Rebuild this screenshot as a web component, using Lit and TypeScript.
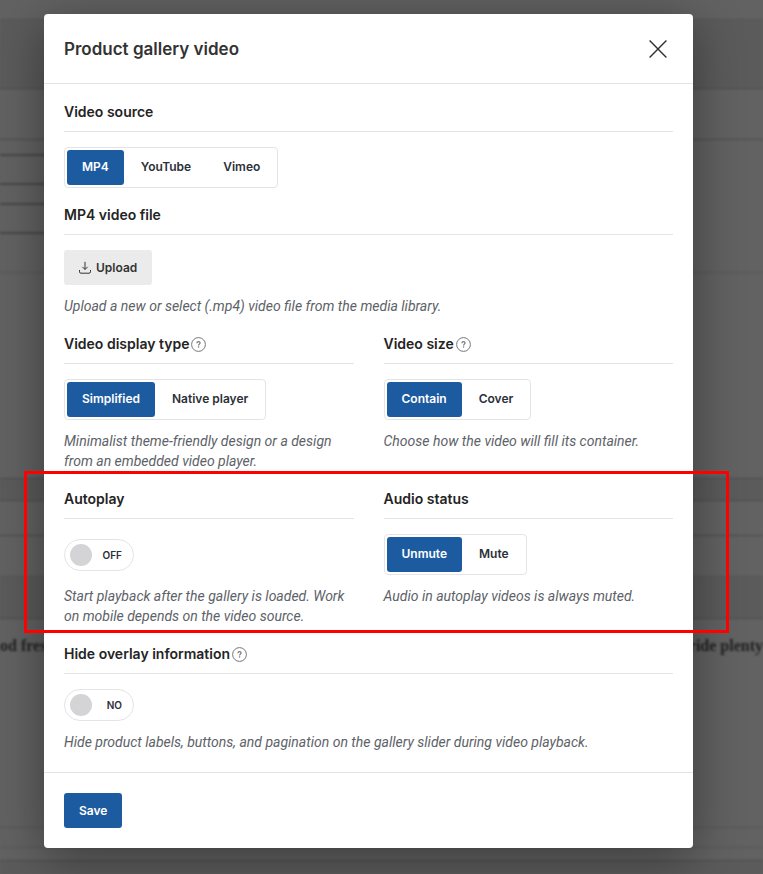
import { LitElement, html, css, nothing } from "lit";
import { customElement, property, state } from "lit/decorators.js";
import { classMap } from "lit/directives/class-map.js";
import { styleMap } from "lit/directives/style-map.js";

const base = css`
  :host {
    display: block;
    box-sizing: border-box;
    font-family: Inter, "Liberation Sans", sans-serif;
  }
  *,
  *::before,
  *::after {
    box-sizing: border-box;
  }
`;

@customElement("setting-field")
export class SettingField extends LitElement {
  @property() heading = "";
  @property() note = "";
  @property({ type: Boolean }) help = false;
  @property({ type: Boolean }) tall = false;

  static styles = [
    base,
    css`
      .heading {
        display: flex;
        align-items: center;
        gap: 2px;
        height: 32px;
        padding-bottom: 7px;
        margin: 0 0 15px;
        border-bottom: 1px solid #e4e4e4;
        color: #242424;
        font-size: 14px;
        font-weight: 600;
        line-height: 24px;
      }
      .help {
        display: grid;
        place-items: center;
        width: 15px;
        height: 15px;
        padding: 0;
        border: 0;
        background: none;
        color: #777;
      }
      .control {
        display: flex;
        align-items: center;
      }
      .tall {
        min-height: 41px;
      }
      .note {
        margin: 11px 0 1px;
        color: #5d6268;
        font-family: Roboto, "Liberation Sans", sans-serif;
        font-size: 14px;
        font-style: italic;
        line-height: 20px;
      }
    `,
  ];

  render() {
    return html`
      <h3 class="heading">
        <span>${this.heading}</span>
        ${this.help
          ? html`<button class="help" type="button" aria-label="Help">
              <svg width="15" height="15" viewBox="0 0 15 15" fill="none" stroke="currentColor">
                <circle cx="7.5" cy="7.5" r="6.9" stroke-width="1" />
                <path d="M5.9 6.2c0-1 .7-1.6 1.6-1.6s1.6.6 1.6 1.4c0 1.1-1.5 1.2-1.5 2.4" stroke-width="1.2" />
                <path d="M7.55 9.3v1.3" stroke-width="1.3" />
              </svg>
            </button>`
          : nothing}
      </h3>
      <div class=${classMap({ control: true, tall: this.tall })}><slot></slot></div>
      ${this.note ? html`<p class="note">${this.note}</p>` : nothing}
    `;
  }
}

@customElement("segment-group")
export class SegmentGroup extends LitElement {
  @property() label = "";
  @property({ attribute: false }) options: string[] = [];
  @state() private selected = 0;

  static styles = [
    base,
    css`
      .group {
        display: flex;
        gap: 2px;
        margin: 0;
        padding: 2px;
        border: 1px solid #e4e4e4;
        border-radius: 4px;
      }
      .option {
        position: relative;
        display: block;
        height: 35px;
        padding: 0 15px;
        border-radius: 3px;
        color: #2c3038;
        font-size: 12px;
        font-weight: 600;
        line-height: 34px;
        white-space: nowrap;
      }
      .chosen {
        background: #1d5ba1;
        color: #fff;
      }
      .radio {
        position: absolute;
        inset: 0;
        margin: 0;
        opacity: 0;
      }
    `,
  ];

  render() {
    return html`<div class="group" role="radiogroup" aria-label=${this.label}>
      ${this.options.map(
        (text, i) => html`<label class=${classMap({ option: true, chosen: i === this.selected })}
          ><input
            class="radio"
            type="radio"
            name="choice"
            .checked=${i === this.selected}
            @change=${() => (this.selected = i)}
          />${text}</label
        >`
      )}
    </div>`;
  }
}

@customElement("toggle-switch")
export class ToggleSwitch extends LitElement {
  @property() label = "";
  @property() on = "ON";
  @property() off = "OFF";
  @state() private checked = false;

  static styles = [
    base,
    css`
      .toggle {
        position: relative;
        display: flex;
        align-items: center;
        justify-content: space-between;
        width: 70px;
        height: 32px;
        padding: 0 11px 0 5px;
        border: 1px solid #e4e4e4;
        border-radius: 16px;
        color: #2c3038;
        font-size: 10px;
        font-weight: 600;
      }
      .knob {
        width: 22px;
        height: 22px;
        border-radius: 50%;
        background: #d4d4d6;
      }
      .active {
        flex-direction: row-reverse;
        padding: 0 5px 0 11px;
      }
      .active .knob {
        background: #1d5ba1;
      }
      .box {
        position: absolute;
        inset: 0;
        width: 100%;
        height: 100%;
        margin: 0;
        opacity: 0;
      }
    `,
  ];

  render() {
    return html`<label class=${classMap({ toggle: true, active: this.checked })}>
      <input
        class="box"
        type="checkbox"
        aria-label=${this.label}
        .checked=${this.checked}
        @change=${() => (this.checked = !this.checked)}
      />
      <span class="knob"></span>
      <span>${this.checked ? this.on : this.off}</span>
    </label>`;
  }
}

type Band = { height: number; shade?: boolean; edge?: "faint" | "mid" | "field"; text?: [string, string] };

// Rows of the admin page that sits dimmed behind the dialog.
const bands: Band[] = [
  { height: 20, edge: "faint" },
  { height: 69, shade: true, edge: "mid" },
  { height: 51, edge: "mid" },
  { height: 16, edge: "field" },
  { height: 29, edge: "field" },
  { height: 20, edge: "field" },
  { height: 29, edge: "field" },
  { height: 39, edge: "faint" },
  { height: 206, edge: "mid" },
  { height: 22, shade: true, edge: "mid" },
  { height: 35, edge: "mid" },
  { height: 41, edge: "faint" },
  { height: 42, shade: true, edge: "mid" },
  { height: 209, edge: "faint", text: ["od fres", "ride plenty"] },
  { height: 20, edge: "faint" },
  { height: 13, edge: "mid" },
];

@customElement("app-root")
export class AppRoot extends LitElement {
  static styles = [
    base,
    css`
      :host {
        position: relative;
        min-height: 100vh;
        overflow: hidden;
        background: #626262;
      }
      .backdrop {
        position: absolute;
        inset: 0;
        display: flex;
        flex-direction: column;
        filter: blur(1px);
      }
      .band {
        flex: none;
        border-bottom: 1px solid transparent;
      }
      .shade,
      .rest {
        background: #5b5b5b;
      }
      .rest {
        flex: 1;
      }
      .faint {
        border-bottom-color: #575757;
      }
      .mid {
        border-bottom-color: #4c4c4c;
      }
      .field {
        width: 50%;
        border-bottom: 2px solid #484848;
      }
      .copy {
        display: flex;
        justify-content: space-between;
        margin: 0;
        padding-top: 16px;
        color: #222;
        font-family: "Liberation Serif", serif;
        font-size: 16px;
        font-weight: 700;
        line-height: 22px;
      }
      .dialog {
        position: relative;
        margin: 14px 70px 26px 44px;
        border-radius: 4px;
        background: #fff;
        box-shadow: 0 10px 50px rgba(0, 0, 0, 0.4);
      }
      .header {
        display: flex;
        align-items: center;
        justify-content: space-between;
        height: 70px;
        padding: 0 20px;
        border-bottom: 1px solid #e4e4e4;
      }
      .title {
        margin: 0;
        color: #333;
        font-size: 17px;
        font-weight: 600;
        line-height: 24px;
      }
      .close {
        display: grid;
        place-items: center;
        width: 30px;
        height: 30px;
        padding: 0;
        border: 0;
        background: none;
        color: #2f2f2f;
      }
      .body {
        display: flex;
        flex-direction: column;
        gap: 15px;
        padding: 16px 20px 19px;
      }
      .pair {
        position: relative;
        display: grid;
        grid-template-columns: 1fr 1fr;
        gap: 30px;
      }
      .marked::after {
        content: "";
        position: absolute;
        inset: -16px -56px -6px -40px;
        border: 3px solid #f00;
        pointer-events: none;
      }
      .footer {
        padding: 20px;
        border-top: 1px solid #e4e4e4;
      }
      .button {
        display: flex;
        align-items: center;
        gap: 5px;
        height: 35px;
        padding: 0 15px;
        border: 0;
        border-radius: 3px;
        font-family: inherit;
        font-size: 12px;
        font-weight: 600;
      }
      .primary {
        background: #1d5ba1;
        color: #fff;
      }
      .plain {
        background: #ebebeb;
        color: #333;
      }
    `,
  ];

  render() {
    return html`
      <div class="backdrop" aria-hidden="true">
        ${bands.map(
          (b) => html`<div
            class="band ${b.edge ?? ""} ${b.shade ? "shade" : ""}"
            style=${styleMap({ height: `${b.height}px` })}
          >
            ${b.text ? html`<p class="copy"><span>${b.text[0]}</span><span>${b.text[1]}</span></p>` : nothing}
          </div>`
        )}
        <div class="rest"></div>
      </div>
      <section class="dialog" role="dialog" aria-labelledby="title">
        <header class="header">
          <h2 class="title" id="title">Product gallery video</h2>
          <button class="close" type="button" aria-label="Close">
            <svg width="18" height="18" viewBox="0 0 18 18" fill="none" stroke="currentColor" stroke-width="1.4">
              <path d="M.6.6l16.8 16.8M17.4.6L.6 17.4" />
            </svg>
          </button>
        </header>
        <div class="body">
          <setting-field heading="Video source">
            <segment-group label="Video source" .options=${["MP4", "YouTube", "Vimeo"]}></segment-group>
          </setting-field>
          <setting-field
            heading="MP4 video file"
            note="Upload a new or select (.mp4) video file from the media library."
          >
            <button class="button plain" type="button">
              <svg width="12" height="13" viewBox="0 0 12 13" fill="none" stroke="currentColor" stroke-width="1">
                <path d="M.5 9v1.8c0 .9.5 1.4 1.4 1.4h8.2c.9 0 1.4-.5 1.4-1.4V9M6 .8v7.6M3.4 5.9L6 8.5l2.6-2.6" />
              </svg>
              Upload
            </button>
          </setting-field>
          <div class="pair">
            <setting-field
              heading="Video display type"
              help
              note="Minimalist theme-friendly design or a design from an embedded video player."
            >
              <segment-group label="Video display type" .options=${["Simplified", "Native player"]}></segment-group>
            </setting-field>
            <setting-field heading="Video size" help note="Choose how the video will fill its container.">
              <segment-group label="Video size" .options=${["Contain", "Cover"]}></segment-group>
            </setting-field>
          </div>
          <div class="pair marked">
            <setting-field
              heading="Autoplay"
              tall
              note="Start playback after the gallery is loaded. Work on mobile depends on the video source."
            >
              <toggle-switch label="Autoplay"></toggle-switch>
            </setting-field>
            <setting-field heading="Audio status" tall note="Audio in autoplay videos is always muted.">
              <segment-group label="Audio status" .options=${["Unmute", "Mute"]}></segment-group>
            </setting-field>
          </div>
          <setting-field
            heading="Hide overlay information"
            help
            note="Hide product labels, buttons, and pagination on the gallery slider during video playback."
          >
            <toggle-switch label="Hide overlay information" on="YES" off="NO"></toggle-switch>
          </setting-field>
        </div>
        <footer class="footer">
          <button class="button primary" type="button">Save</button>
        </footer>
      </section>
    `;
  }
}
